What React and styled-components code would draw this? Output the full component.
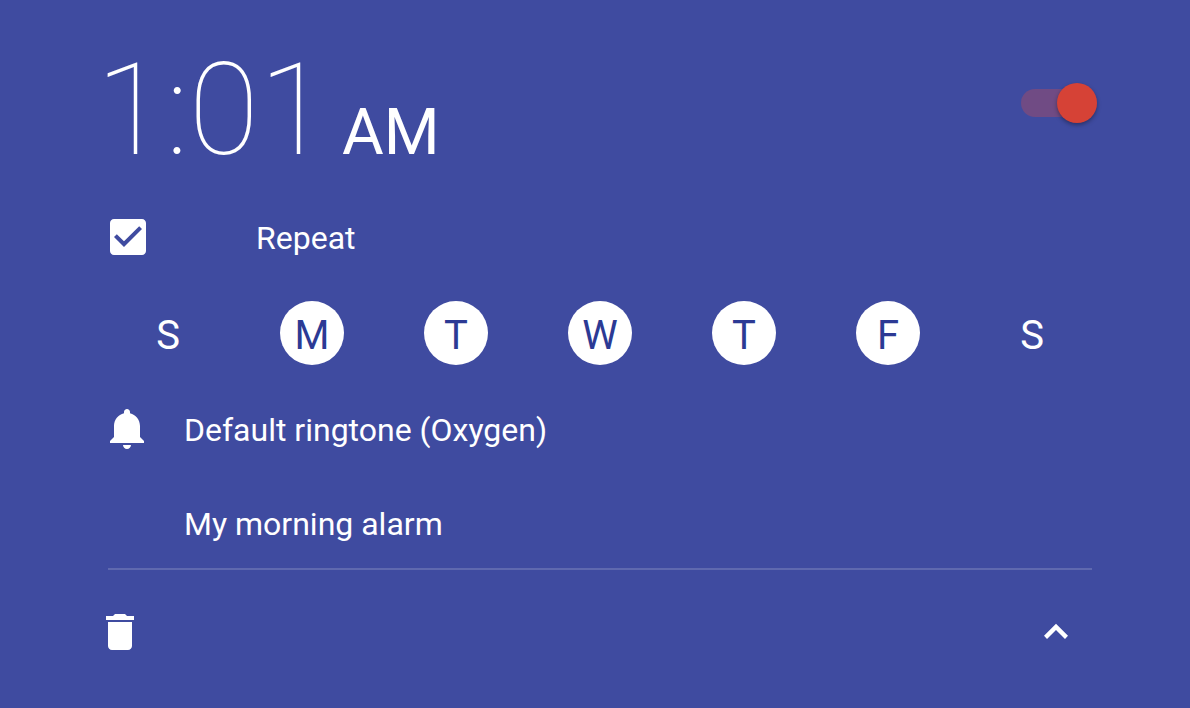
import React, { useState } from "react";
import styled, { createGlobalStyle } from "styled-components";

const GlobalStyle = createGlobalStyle`
  *, *::before, *::after { box-sizing: border-box; }
  body {
    margin: 0;
    background: #3f4ba0;
    color: #ffffff;
    font-family: Roboto, "Open Sans", sans-serif;
  }
  button, input { font: inherit; color: inherit; margin: 0; }
`;

const Card = styled.main`
  display: flex;
  flex-direction: column;
  min-height: 100vh;
  padding: 46px 86px 52px 96px;
  background: #3f4ba0;
`;

const PlainButton = styled.button`
  display: flex;
  align-items: center;
  padding: 0;
  border: 0;
  background: none;
  text-align: left;
  cursor: pointer;
`;

const Header = styled.header`
  display: flex;
  align-items: center;
  justify-content: space-between;
  padding-right: 7px;
`;

const TimeButton = styled(PlainButton)`
  align-items: baseline;
  gap: 13px;
`;

const Time = styled.time`
  font-size: 128px;
  font-weight: 100;
  line-height: 128px;
`;

const Meridiem = styled.span`
  font-size: 64px;
  font-weight: 400;
  line-height: 64px;
`;

const Switch = styled.input`
  appearance: none;
  display: flex;
  align-items: center;
  justify-content: ${(p) => (p.checked ? "flex-end" : "flex-start")};
  width: 76px;
  height: 28px;
  margin-bottom: 14px;
  background: #704b84;
  border-radius: 14px;
  cursor: pointer;

  &::before {
    content: "";
    flex: none;
    width: 40px;
    height: 40px;
    border-radius: 50%;
    background: #d64236;
    box-shadow: 0 2px 4px rgba(0, 0, 0, 0.35);
  }
`;

const Row = styled.div`
  display: flex;
  align-items: center;
  min-height: 48px;
  padding-left: 8px;
`;

const RepeatLabel = styled.label`
  display: flex;
  align-items: center;
  gap: 104px;
  cursor: pointer;
`;

const Tick = styled.span`
  display: grid;
  width: 48px;
  height: 48px;

  & > * { grid-area: 1 / 1; }
`;

const HiddenCheckbox = styled.input`
  appearance: none;
  width: 48px;
  height: 48px;
  cursor: pointer;
`;

const Icon = styled.svg`
  display: block;
  width: 48px;
  height: 48px;
  fill: currentColor;
  pointer-events: none;
`;

const Label = styled.span`
  padding-top: 2px;
  font-size: 32px;
  line-height: 46px;
`;

const Days = styled.div`
  display: grid;
  grid-template-columns: repeat(7, 1fr);
  justify-items: center;
  margin: 40px 0;
`;

const Day = styled.button`
  width: 64px;
  height: 64px;
  padding: 6px 0 0;
  border: 0;
  border-radius: 50%;
  background: ${(p) => (p.$on ? "#ffffff" : "transparent")};
  color: ${(p) => (p.$on ? "#2c3a94" : "#ffffff")};
  font-size: 40px;
  line-height: 58px;
  text-align: center;
  cursor: pointer;
`;

const RingtoneButton = styled(PlainButton)`
  gap: 32px;
`;

const NameRow = styled(Row)`
  margin-top: 46px;
  padding-left: 88px;
`;

const Divider = styled.hr`
  width: auto;
  height: 2px;
  margin: 21px 12px 38px;
  border: 0;
  background: #5f69af;
`;

const Footer = styled.footer`
  display: flex;
  justify-content: space-between;
  padding-right: 24px;
`;

const RepeatRow = styled(Row)`
  margin-top: 39px;
`;

const WEEK = [
  ["S", "Sunday", false],
  ["M", "Monday", true],
  ["T", "Tuesday", true],
  ["W", "Wednesday", true],
  ["T", "Thursday", true],
  ["F", "Friday", true],
  ["S", "Saturday", false],
];

const ICONS = {
  checked:
    "M19 3H5c-1.11 0-2 .9-2 2v14c0 1.1.89 2 2 2h14c1.11 0 2-.9 2-2V5c0-1.1-.89-2-2-2zm-9 14l-5-5 1.41-1.41L10 14.17l7.59-7.59L19 8l-9 9z",
  unchecked:
    "M19 5v14H5V5h14m0-2H5c-1.1 0-2 .9-2 2v14c0 1.1.9 2 2 2h14c1.1 0 2-.9 2-2V5c0-1.1-.9-2-2-2z",
  bell:
    "M11.5 22c1.1 0 2-.9 2-2h-4c0 1.1.9 2 2 2zm6.5-6v-5.5c0-3.07-2.13-5.64-5-6.32V3.5c0-.83-.67-1.5-1.5-1.5S10 2.67 10 3.5v.68c-2.87.68-5 3.25-5 6.32V16l-2 2v1h17v-1l-2-2z",
  trash:
    "M6 19c0 1.1.9 2 2 2h8c1.1 0 2-.9 2-2V7H6v12zM19 4h-3.5l-1-1h-5l-1 1H5v2h14V4z",
  collapse: "M12 7.9L6 13.9L7.5 15.5L12 11L16.5 15.5L18 13.9Z",
};

function Glyph({ name }) {
  return (
    <Icon viewBox="0 0 24 24" aria-hidden="true">
      <path d={ICONS[name]} />
    </Icon>
  );
}

export default function App() {
  const [enabled, setEnabled] = useState(true);
  const [repeat, setRepeat] = useState(true);
  const [days, setDays] = useState(WEEK.map((d) => d[2]));

  const toggleDay = (index) =>
    setDays(days.map((on, i) => (i === index ? !on : on)));

  return (
    <>
      <GlobalStyle />
      <Card>
        <Header>
          <TimeButton type="button">
            <Time dateTime="01:01">1:01</Time>
            <Meridiem>AM</Meridiem>
          </TimeButton>
          <Switch
            type="checkbox"
            role="switch"
            aria-label="Alarm on"
            checked={enabled}
            onChange={() => setEnabled(!enabled)}
          />
        </Header>

        <RepeatRow>
          <RepeatLabel>
            <Tick>
              <HiddenCheckbox
                type="checkbox"
                checked={repeat}
                onChange={() => setRepeat(!repeat)}
              />
              <Glyph name={repeat ? "checked" : "unchecked"} />
            </Tick>
            <Label>Repeat</Label>
          </RepeatLabel>
        </RepeatRow>

        <Days role="group" aria-label="Repeat on">
          {WEEK.map(([letter, name], i) => (
            <Day
              key={name}
              type="button"
              $on={days[i]}
              aria-label={name}
              aria-pressed={days[i]}
              onClick={() => toggleDay(i)}
            >
              {letter}
            </Day>
          ))}
        </Days>

        <Row>
          <RingtoneButton type="button">
            <Glyph name="bell" />
            <Label>Default ringtone (Oxygen)</Label>
          </RingtoneButton>
        </Row>

        <NameRow>
          <PlainButton type="button">
            <Label>My morning alarm</Label>
          </PlainButton>
        </NameRow>

        <Divider />

        <Footer>
          <PlainButton type="button" aria-label="Delete alarm">
            <Glyph name="trash" />
          </PlainButton>
          <PlainButton type="button" aria-label="Collapse">
            <Glyph name="collapse" />
          </PlainButton>
        </Footer>
      </Card>
    </>
  );
}
